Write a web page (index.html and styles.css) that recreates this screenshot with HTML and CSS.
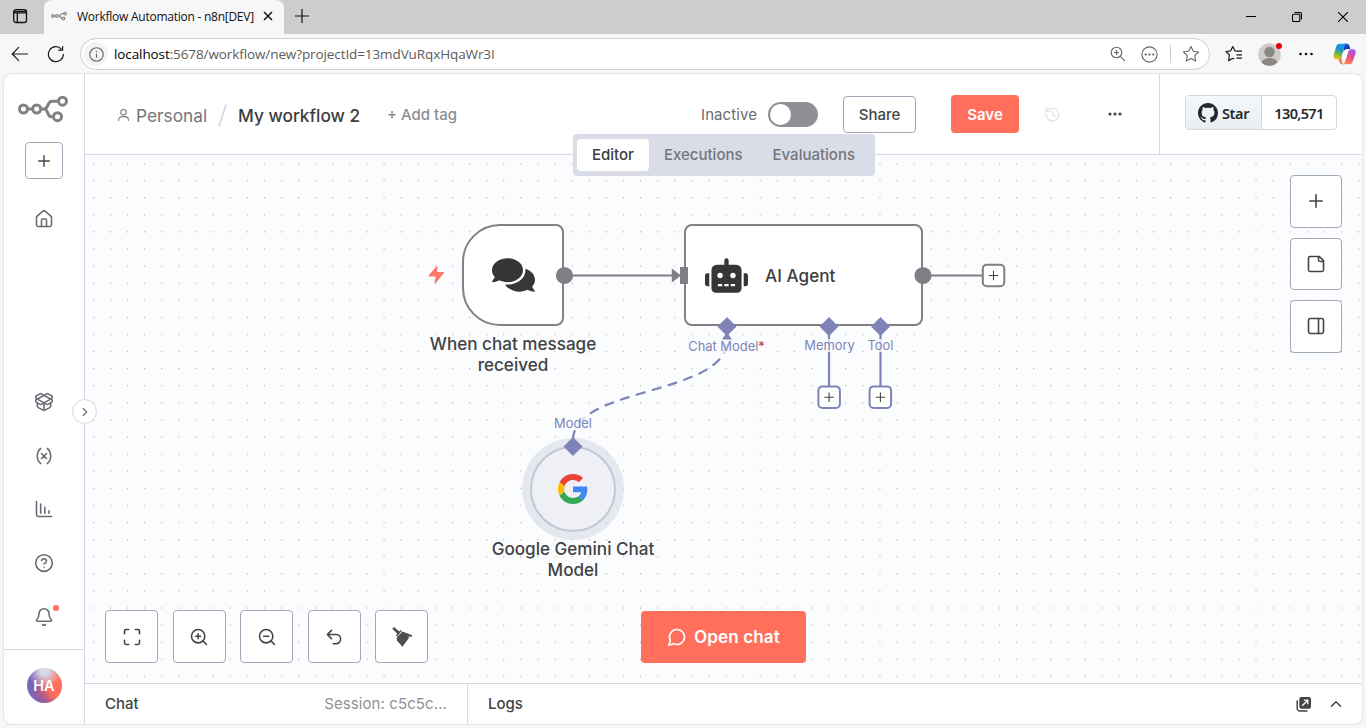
FILE: index.html
```html
<!DOCTYPE html>
<html lang="en">
<head>
<meta charset="utf-8">
<title>Workflow Automation - n8n[DEV]</title>
<link rel="stylesheet" href="styles.css">
</head>
<body>
<div class="browser">
  <div class="tabstrip">
    <div class="tab-actions">
      <svg width="16" height="16" viewBox="0 0 16 16" fill="none" stroke="#111" stroke-width="1.3"><rect x="1.7" y="1.7" width="12.8" height="12.8" rx="2.2"/><path d="M2 3.4h12.4M2 4.8h12.4M5.3 5v9.3" /></svg>
    </div>
    <div class="tab">
      <svg class="favicon" width="16" height="10" viewBox="0 0 50 28" fill="none" stroke="#8a8a8a" stroke-width="4"><circle cx="6" cy="14" r="4"/><circle cx="19" cy="14" r="4"/><circle cx="44" cy="6.500" r="4"/><circle cx="39" cy="21.500" r="4"/><path d="M10 14h5M23 14h3c5 0 3-7.500 8-7.500h6M26 14c5 0 3 7.500 8 7.500h1"/></svg>
      <span class="tab-title">Workflow Automation - n8n[DEV]</span>
      <svg width="10" height="10" viewBox="0 0 10 10" stroke="#111" stroke-width="1.500"><path d="M1 1l8 8M9 1l-8 8"/></svg>
    </div>
    <svg class="new-tab" width="14" height="14" viewBox="0 0 14 14" stroke="#111" stroke-width="1.200"><path d="M7 0v14M0 7h14"/></svg>
    <div class="window-buttons">
      <svg width="10" height="10" viewBox="0 0 10 10" stroke="#000" fill="none"><path d="M0 4.500h10"/></svg>
      <svg width="10" height="10" viewBox="0 0 10 10" stroke="#000" fill="none" stroke-width="1.100"><rect x=".5" y="2.200" width="7.300" height="7.300" rx="1.200"/><path d="M2.500.5h5a2 2 0 0 1 2 2v5"/></svg>
      <svg width="10" height="10" viewBox="0 0 10 10" stroke="#000" fill="none" stroke-width="1.100"><path d="M0 0l10 10M10 0L0 10"/></svg>
    </div>
  </div>
  <div class="toolbar">
    <svg class="nav-back" width="18" height="16" viewBox="0 0 18 16" fill="none" stroke="#1b1b1b" stroke-width="1.200"><path d="M17 8H1.500M8 1.200L1.200 8 8 14.800"/></svg>
    <svg class="nav-reload" width="18" height="18" viewBox="0 0 18 18" fill="none" stroke="#1b1b1b" stroke-width="1.200"><path d="M16.400 9A7.500 7.500 0 1 1 14.500 4.200M15.600 1v4.200h-4.400"/></svg>
    <div class="address">
      <span class="site-info"><svg width="15" height="15" viewBox="0 0 15 15" fill="none" stroke="#666" stroke-width="1.100"><circle cx="7.500" cy="7.500" r="6.700"/><path d="M7.500 6.700v4M7.500 4v1.300"/></svg></span>
      <span class="url"><b>localhost</b>:5678/workflow/new?projectId=13mdVuRqxHqaWr3I</span>
      <svg class="a-zoom" width="16" height="16" viewBox="0 0 16 16" fill="none" stroke="#666" stroke-width="1.100"><circle cx="6.500" cy="6.500" r="5.300"/><path d="M10.300 10.300l4.500 4.500M6.500 4v5M4 6.500h5"/></svg>
      <svg class="a-more" width="17" height="17" viewBox="0 0 17 17" fill="none" stroke="#666" stroke-width="1.100"><circle cx="8.500" cy="8.500" r="7.600"/><g fill="#555" stroke="none"><circle cx="4.700" cy="8.500" r="1.100"/><circle cx="8.500" cy="8.500" r="1.100"/><circle cx="12.300" cy="8.500" r="1.100"/></g></svg>
      <span class="a-sep"></span>
      <svg class="a-star" width="18" height="18" viewBox="0 0 18 18" fill="none" stroke="#666" stroke-width="1.100" stroke-linejoin="round"><path d="M9 1.400l2.300 4.900 5.300.7-3.900 3.700 1 5.300L9 13.400 4.300 16l1-5.300L1.400 7l5.300-.7z"/></svg>
    </div>
    <svg class="favs" width="18" height="18" viewBox="0 0 18 18" fill="none" stroke="#1b1b1b" stroke-width="1.200" stroke-linejoin="round"><path d="M12 6.100l-2-.2L7.800 1.500 5.700 5.800 1 6.500l3.400 3.300L3.600 15.600l4.200-2.300 1.400.8M11 6.200h6M11.500 9.800H17M11.500 13.200H17"/></svg>
    <div class="profile">
      <svg width="23" height="23" viewBox="0 0 23 23"><defs><clipPath id="pc"><circle cx="11.500" cy="11.500" r="11.300"/></clipPath></defs><g clip-path="url(#pc)"><path fill="#cfccc8" d="M0 0h23v23H0z"/><circle cx="11.500" cy="9" r="5.200" fill="#8b8783"/><ellipse cx="11.500" cy="20.500" rx="8" ry="5.500" fill="#8b8783"/></g></svg>
      <i class="profile-dot"></i>
    </div>
    <svg class="menu" width="14" height="4" viewBox="0 0 14 4" fill="#111"><circle cx="1.500" cy="2" r="1.300"/><circle cx="7" cy="2" r="1.300"/><circle cx="12.500" cy="2" r="1.300"/></svg>
    <svg class="copilot" width="23" height="22" viewBox="0 0 23 22">
      <defs>
        <linearGradient id="ca" x1=".5" y1="0" x2=".3" y2="1"><stop offset="0" stop-color="#159ef0"/><stop offset=".35" stop-color="#1c8fce"/><stop offset=".65" stop-color="#62b948"/><stop offset="1" stop-color="#fbc30b"/></linearGradient>
        <linearGradient id="cb" x1=".7" y1="0" x2=".3" y2="1"><stop offset="0" stop-color="#a056ee"/><stop offset=".5" stop-color="#e84f90"/><stop offset="1" stop-color="#ff8a4a"/></linearGradient>
      </defs>
      <path fill="#1746b8" d="M11 .8h2.700c1.800 0 2.300 1 2.900 2.800l.9 2.700h-3.300c-2 0-3.200 1-3.800 3z"/>
      <path fill="url(#ca)" d="M6.700.8h7.200c-1.500.4-2.100 1.500-2.700 3.500L9 12.500c-.7 2.400-1.600 3.700-3.800 3.700H3.100C.6 16.200 0 14.200.8 11.500L3 4.300C3.700 1.900 4.700.8 6.700.8z"/>
      <path fill="#f2683c" d="M5.300 16.200c2 0 3-1.200 3.700-3.600l-.4 4.600c0 2 .8 3.700 2.300 4H9.500c-1.800 0-2.400-1-3-2.700-.4-1.200-.5-1.900-1.200-2.300z"/>
      <path fill="url(#cb)" d="M16.400 21.200H9.700c1.500-.4 2.100-1.500 2.700-3.500L14.700 10c.7-2.400 1.600-3.700 3.800-3.700h1.600c2.500 0 3.100 2 2.300 4.700L20 17.700c-.7 2.400-1.600 3.500-3.600 3.500z"/>
      <path fill="#fff" d="M11.300 9.300c.5-1.900 1.500-3 3.300-3h3.300c-1.700.3-2.600 1.600-3.200 3.700l-1.500 4.800c-.5 1.500-1.500 2.200-3 2.200H8.700c-.1-1.500 0-3 .5-4.600z"/>
    </svg>
  </div>

  <div class="app">
    <aside class="sidebar">
      <svg class="logo" width="50" height="28" viewBox="0 0 50 28" fill="none" stroke="#828282" stroke-width="3"><circle cx="5.500" cy="14" r="4"/><circle cx="18.700" cy="14" r="4"/><circle cx="44.500" cy="6.200" r="4"/><circle cx="39.500" cy="21.700" r="4"/><path d="M9.500 14h5M22.700 14h3.500c4.500 0 2.500-7.800 8-7.800h6.300M26.200 14c4.500 0 2.300 7.700 7 7.700h2.300"/></svg>
      <button class="side-add"><svg class="ic" width="18" height="18" viewBox="0 0 24 24"><path d="M5 12h14M12 5v14"/></svg></button>
      <svg class="ic home" width="20" height="20" viewBox="0 0 24 24"><path d="M15 21v-8a1 1 0 0 0-1-1h-4a1 1 0 0 0-1 1v8"/><path d="M3 10a2 2 0 0 1 .709-1.528l7-6a2 2 0 0 1 2.582 0l7 6A2 2 0 0 1 21 10v9a2 2 0 0 1-2 2H5a2 2 0 0 1-2-2z"/></svg>
      <nav class="side-bottom">
        <svg class="ic" viewBox="0 0 24 24"><path d="M12 22v-9"/><path d="M15.170 2.210a1.670 1.670 0 0 1 1.630 0L21 4.570a1.930 1.930 0 0 1 0 3.360L8.820 14.790a1.655 1.655 0 0 1-1.640 0L3 12.430a1.930 1.930 0 0 1 0-3.360z"/><path d="M20 13v3.870a2.060 2.060 0 0 1-1.110 1.830l-6 3.080a1.930 1.930 0 0 1-1.780 0l-6-3.080A2.060 2.060 0 0 1 4 16.870V13"/><path d="M21 12.430a1.930 1.930 0 0 0 0-3.360L8.830 2.200a1.640 1.640 0 0 0-1.630 0L3 4.570a1.930 1.930 0 0 0 0 3.360l12.180 6.860a1.636 1.636 0 0 0 1.630 0z"/></svg>
        <svg class="ic" viewBox="0 0 24 24"><path d="M8 21s-4-3-4-9 4-9 4-9M16 3s4 3 4 9-4 9-4 9M15 9l-6 6M9 9l6 6"/></svg>
        <svg class="ic" viewBox="0 0 24 24"><path d="M3 3v16a2 2 0 0 0 2 2h16M8 17V6M13 17V10M18 17v-3"/></svg>
        <svg class="ic" viewBox="0 0 24 24"><circle cx="12" cy="12" r="10"/><path d="M9.090 9a3 3 0 0 1 5.830 1c0 2-3 3-3 3M12 17h.01"/></svg>
        <div class="bell"><svg class="ic" viewBox="0 0 24 24"><path d="M10.268 21a2 2 0 0 0 3.464 0"/><path d="M3.262 15.326A1 1 0 0 0 4 17h16a1 1 0 0 0 .740-1.673C19.410 13.956 18 12.499 18 8A6 6 0 0 0 6 8c0 4.499-1.411 5.956-2.738 7.326"/></svg><i></i></div>
      </nav>
      <div class="side-user"><span class="avatar">HA</span></div>
      <span class="expander"><svg class="ic" width="14" height="14" viewBox="0 0 24 24"><path d="M9 18l6-6-6-6"/></svg></span>
    </aside>

    <main class="main">
      <header class="header">
        <div class="crumbs">
          <svg class="ic person" width="13" height="14" viewBox="0 0 24 24"><circle cx="12" cy="7" r="5"/><path d="M3 22v-1a6 6 0 0 1 6-6h6a6 6 0 0 1 6 6v1"/></svg>
          <span class="personal">Personal</span>
          <svg class="slash" width="9" height="23" viewBox="0 0 9 23" stroke="#d9dce8" stroke-width="2"><path d="M8 0.500L1 22.500"/></svg>
          <span class="wf-name">My workflow 2</span>
          <span class="add-tag">+ Add tag</span>
        </div>
        <div class="actions">
          <span class="inactive">Inactive</span>
          <span class="switch"></span>
          <button class="share">Share</button>
          <button class="save">Save</button>
          <svg class="ic history" width="17" height="17" viewBox="0 0 24 24"><path d="M3 12a9 9 0 1 0 9-9 9.750 9.750 0 0 0-6.740 2.740L3 8M3 3v5h5M12 7v5l4 2"/></svg>
          <svg class="dots" width="14" height="4" viewBox="0 0 14 4" fill="#444"><circle cx="2" cy="2" r="1.600"/><circle cx="7" cy="2" r="1.600"/><circle cx="12" cy="2" r="1.600"/></svg>
        </div>
        <div class="github">
          <div class="gh-button">
            <span class="gh-star"><svg width="20" height="20" viewBox="0 0 16 16" fill="#24292f"><path d="M8 0C3.580 0 0 3.580 0 8c0 3.540 2.290 6.530 5.470 7.590.4.070.55-.17.55-.38 0-.19-.01-.82-.01-1.490-2.010.37-2.530-.49-2.690-.94-.09-.23-.48-.94-.82-1.130-.28-.15-.68-.52-.01-.53.63-.01 1.080.58 1.230.82.72 1.210 1.870.87 2.330.66.07-.52.28-.87.51-1.070-1.780-.2-3.640-.89-3.640-3.950 0-.87.31-1.590.82-2.150-.08-.2-.36-1.020.08-2.120 0 0 .67-.21 2.200.82.64-.18 1.320-.27 2-.27s1.360.09 2 .27c1.530-1.040 2.200-.82 2.200-.82.44 1.100.16 1.920.08 2.120.51.56.82 1.270.82 2.150 0 3.070-1.870 3.750-3.650 3.950.29.25.54.73.54 1.480 0 1.070-.01 1.930-.01 2.200 0 .21.15.46.55.38A8.010 8.010 0 0 0 16 8c0-4.420-3.580-8-8-8z"/></svg>Star</span>
            <span class="gh-count">130,571</span>
          </div>
        </div>
      </header>

      <section class="canvas">
        <svg class="layer" viewBox="85 155 1277 528" fill="none">
          <defs><pattern id="dots" x="92.900" y="162.900" width="17.097" height="17.097" patternUnits="userSpaceOnUse"><circle cx=".6" cy=".6" r=".6" fill="#9a9ea8"/></pattern></defs>
          <rect x="85" y="155" width="1277" height="528" fill="url(#dots)"/>
          <path d="M564 275.500H676M923 275.500H983" stroke="#7d7f84" stroke-width="2"/>
          <path d="M829 327V386M880.500 327V386" stroke="#7f83b8" stroke-width="2.200"/>
          <path d="M573 440C573 386 727 396 727 340" stroke="#7f83b8" stroke-width="2.200" stroke-dasharray="10 6.500"/>
        </svg>

        <div class="node trigger"><svg width="43" height="34" viewBox="0 32 576 448" fill="#363636"><path d="M416 192c0-88.400-93.100-160-208-160S0 103.600 0 192c0 34.300 14.100 65.900 38 92-13.400 30.200-35.500 54.200-35.800 54.500-2.200 2.300-2.800 5.700-1.500 8.700S4.800 352 8 352c36.600 0 66.900-12.300 88.700-25 32.200 15.700 70.300 25 111.300 25 114.900 0 208-71.600 208-160zm122 220c23.900-26 38-57.700 38-92 0-66.900-53.500-124.200-129.300-148.100.9 6.600 1.300 13.300 1.300 20.100 0 105.900-107.700 192-240 192-10.800 0-21.300-.8-31.700-1.900C207.800 439.600 281.800 480 368 480c41 0 79.100-9.200 111.300-25 21.800 12.700 52.100 25 88.700 25 3.200 0 6.100-1.900 7.300-4.800 1.300-2.900.7-6.300-1.500-8.700-.3-.3-22.400-24.200-35.800-54.500z"/></svg></div>
        <div class="node agent"><svg width="43" height="35" viewBox="0 0 640 512" fill="#363636"><path d="M32,224H64V416H32A31.960,31.960,0,0,1,0,384V256A31.960,31.960,0,0,1,32,224Zm512-48V448a64.060,64.060,0,0,1-64,64H160a64.060,64.060,0,0,1-64-64V176a79.970,79.970,0,0,1,80-80H288V32a32,32,0,0,1,64,0V96H464A79.970,79.970,0,0,1,544,176ZM264,256a40,40,0,1,0-40,40A40,40,0,0,0,264,256Zm-8,128H192v32h64Zm96,0H288v32h64ZM456,256a40,40,0,1,0-40,40A40,40,0,0,0,456,256Zm-8,128H384v32h64ZM640,256V384a31.960,31.960,0,0,1-32,32H576V224h32A31.960,31.960,0,0,1,640,256Z"/></svg><span>AI Agent</span></div>
        <div class="node gemini"><svg width="30" height="30" viewBox="0 0 48 48"><path fill="#EA4335" d="M24 9.500c3.540 0 6.710 1.220 9.210 3.600l6.850-6.850C35.900 2.380 30.470 0 24 0 14.620 0 6.510 5.380 2.560 13.220l7.980 6.190C12.430 13.720 17.740 9.500 24 9.500z"/><path fill="#4285F4" d="M46.980 24.550c0-1.570-.15-3.090-.38-4.550H24v9.020h12.940c-.58 2.960-2.260 5.480-4.780 7.180l7.730 6c4.510-4.180 7.090-10.360 7.090-17.650z"/><path fill="#FBBC05" d="M10.530 28.590c-.48-1.450-.76-2.990-.76-4.590s.27-3.140.76-4.590l-7.980-6.190C.92 16.460 0 20.120 0 24c0 3.880.92 7.540 2.560 10.780l7.970-6.190z"/><path fill="#34A853" d="M24 48c6.480 0 11.930-2.130 15.890-5.810l-7.730-6c-2.150 1.450-4.920 2.300-8.160 2.300-6.260 0-11.570-4.220-13.470-9.910l-7.980 6.190C6.510 42.620 14.620 48 24 48z"/></svg></div>

        <svg class="layer" viewBox="85 155 1277 528" fill="none">
          <path d="M429.300 275.800L437 267 436 272.800H443.300L435.200 282.500 436.600 275.800z" fill="#ff7766" stroke="#ff7766" stroke-width="1.400" stroke-linejoin="round"/>
          <g fill="#7d7f84"><circle cx="564.500" cy="275.500" r="8.600"/><circle cx="923" cy="275.500" r="8.600"/><path d="M680 267h8v17h-8zM671.800 268.500L681 275.500 671.800 282.500z"/></g>
          <g fill="#7f83b8"><path d="M727 317l9.500 9.500-9.500 9.500-9.500-9.500zM829 317l9.500 9.500-9.500 9.500-9.500-9.500zM880.500 317l9.500 9.500-9.500 9.500-9.500-9.500zM573 437l9.500 9.500-9.500 9.500-9.500-9.500zM727 332l5 7.500h-10z"/></g>
          <g fill="#fff" stroke-width="2"><rect x="982.800" y="264.800" width="21.500" height="21.500" rx="4" stroke="#7d7f84"/><rect x="818.400" y="386.400" width="21.500" height="21.500" rx="4" stroke="#7f83b8"/><rect x="869.600" y="386.400" width="21.500" height="21.500" rx="4" stroke="#7f83b8"/></g>
          <path d="M988.800 275.500h9.400M993.500 270.800v9.400M824.400 397.200h9.400M829.100 392.500v9.400M875.700 397.200h9.400M880.400 392.500v9.400" stroke="#444" stroke-width="1.100"/>
        </svg>

        <span class="caption cap-trigger">When chat message<br>received</span>
        <span class="caption cap-gemini">Google Gemini Chat<br>Model</span>
        <span class="port p-chat">Chat Model<em>*</em></span>
        <span class="port p-memory">Memory</span>
        <span class="port p-tool">Tool</span>
        <span class="port p-model">Model</span>

        <div class="view-tabs"><span class="on">Editor</span><span>Executions</span><span>Evaluations</span></div>

        <div class="overlay">
          <div class="right-tools">
            <button class="sq"><svg class="ic" viewBox="0 0 24 24"><path d="M4.500 12h15M12 4.500v15"/></svg></button>
            <button class="sq"><svg class="ic" viewBox="0 0 24 24"><path d="M16 3H5a2 2 0 0 0-2 2v14a2 2 0 0 0 2 2h14a2 2 0 0 0 2-2V8zM15 3v4a2 2 0 0 0 2 2h4"/></svg></button>
            <button class="sq"><svg class="ic" viewBox="0 0 24 24"><rect x="3" y="3" width="18" height="18" rx="2"/><path d="M15 3v18"/></svg></button>
          </div>
          <div class="bottom-tools">
            <button class="sq"><svg class="ic" viewBox="0 0 24 24"><path d="M8 3H5a2 2 0 0 0-2 2v3M21 8V5a2 2 0 0 0-2-2h-3M3 16v3a2 2 0 0 0 2 2h3M16 21h3a2 2 0 0 0 2-2v-3"/></svg></button>
            <button class="sq"><svg class="ic" viewBox="0 0 24 24"><circle cx="11" cy="11" r="8"/><path d="M21 21l-4.350-4.350M11 8v6M8 11h6"/></svg></button>
            <button class="sq"><svg class="ic" viewBox="0 0 24 24"><circle cx="11" cy="11" r="8"/><path d="M21 21l-4.350-4.350M8 11h6"/></svg></button>
            <button class="sq"><svg class="ic" viewBox="0 0 24 24"><path d="M9 14L4 9l5-5M4 9h10.500a5.500 5.500 0 0 1 0 11H11"/></svg></button>
            <button class="sq"><svg class="broom" width="20" height="20" viewBox="0 0 20 20" fill="#4d4d4d"><path d="M.3 1.700L2 .1l5.300 4.300 1.500-1.500 1.100.9-5 5.700-1.100-.9 1.500-1.900zM10.500 4.600L20 8.300v1.500l-3.800-.4.800 1.600-6.700 8.800-2-2.600-3.300-3.500-.3-3.200z"/></svg></button>
          </div>
          <button class="open-chat"><svg class="ic" width="20" height="20" viewBox="0 0 24 24"><path d="M7.900 20A9 9 0 1 0 4 16.100L2 22z"/></svg><span>Open chat</span></button>
        </div>
      </section>

      <footer class="footer">
        <div class="chat-panel"><span>Chat</span><span class="session">Session: c5c5c...</span></div>
        <div class="logs-panel"><span>Logs</span>
          <div class="log-icons">
            <svg width="16" height="16" viewBox="0 0 16 16"><path d="M3.500 1h9.300A2.200 2.200 0 0 1 15 3.200v7.300a2.200 2.200 0 0 1-2.200 2.200H5.500a2.200 2.200 0 0 1-2.200-2.200V3.200A2.200 2.200 0 0 1 5.500 1z" fill="#444"/><path d="M1.200 5v7.300a2.700 2.700 0 0 0 2.700 2.700H11" fill="none" stroke="#444" stroke-width="1.500" stroke-linecap="round"/><path d="M6.200 9.800l5.300-5.300M7.800 4.200h4v4" fill="none" stroke="#fff" stroke-width="1.300"/></svg>
            <svg class="ic" width="18" height="18" viewBox="0 0 24 24"><path d="M18 15l-6-6-6 6"/></svg>
          </div>
        </div>
      </footer>
    </main>
  </div>
</div>
</body>
</html>
```
FILE: styles.css
```css
* { box-sizing: border-box; }
body { margin: 0; font-family: Inter, sans-serif; background: #f7f7f7; color: #414244; }
svg { display: block; flex: none; }
button { font: inherit; padding: 0; margin: 0; background: #fff; border: 1px solid #a3a8b9; border-radius: 4px; display: flex; align-items: center; justify-content: center; color: #444; }
.ic { fill: none; stroke: currentColor; stroke-width: 1.900; stroke-linecap: round; stroke-linejoin: round; }

.browser { width: 1366px; height: 728px; overflow: hidden; display: flex; flex-direction: column; }
.tabstrip { height: 34px; flex: none; background: #cdcdcd; display: flex; align-items: center; }
.tab-actions { width: 44px; height: 34px; padding: 8px 0 0 12px; }
.tab { width: 240px; height: 34px; background: #f7f7f7; border-radius: 8px 8px 0 0; display: flex; align-items: center; padding-left: 7px; padding-bottom: 2px; }
.tab-title { font: 12px "Open Sans", "Noto Sans", sans-serif; color: #111; width: 186px; margin-left: 10px; letter-spacing: -.25px; white-space: nowrap; }
.new-tab { margin: -3px 0 0 11px; }
.window-buttons { display: flex; gap: 36px; margin-left: auto; padding-right: 18px; }

.toolbar { height: 40px; flex: none; display: flex; align-items: center; padding-left: 11px; }
.nav-reload { margin: 0 15px 0 18px; }
.address { width: 1130px; height: 32px; background: #fff; border: 1px solid #cfcfcf; border-radius: 16px; display: flex; align-items: center; padding-left: 3px; }
.site-info { width: 24px; height: 24px; border-radius: 50%; background: #f3f3f3; display: flex; align-items: center; justify-content: center; }
.url { font: 13.500px "Open Sans", "Noto Sans", sans-serif; color: #5c5c5c; margin-left: 6px; width: 995px; white-space: nowrap; letter-spacing: -.1px; }
.url b { font-weight: 400; color: #000; }
.a-zoom { margin-left: 1px; }
.a-more { margin-left: 15px; }
.a-sep { width: 1px; height: 18px; background: #ccc; margin: 0 11px 0 12px; }
.favs { margin-left: 15px; }
.profile { position: relative; margin-left: 15px; }
.profile-dot { position: absolute; right: -1px; top: 0; width: 6px; height: 6px; border-radius: 50%; background: #e3000b; }
.menu { margin-left: 18px; }
.copilot { margin-left: 20px; }

.app { width: 1358px; height: 650px; flex: none; margin-left: 4px; background: #fff; border-radius: 8px; display: flex; box-shadow: 0 0 2px #bbb; }
.sidebar { position: relative; width: 81px; flex: none; border-right: 1px solid #d5d9e6; display: flex; flex-direction: column; align-items: center; color: #6a6c74; }
.logo { margin-top: 21px; margin-right: 3px; }
.side-add { width: 38px; height: 37px; margin-top: 19px; }
.home { margin-top: 30px; }
.side-bottom { margin-top: auto; display: flex; flex-direction: column; gap: 33.800px; }
.side-bottom .ic { width: 20px; height: 20px; }
.bell { position: relative; }
.bell i { position: absolute; left: 19px; top: -2px; width: 6px; height: 6px; border-radius: 50%; background: #ff6d5a; }
.side-user { margin-top: 22px; width: 80px; height: 75px; border-top: 1px solid #d5d9e6; display: flex; justify-content: center; padding-top: 18px; }
.avatar { width: 35px; height: 35px; border-radius: 50%; color: #fff; font-weight: 600; font-size: 14.500px; display: flex; align-items: center; justify-content: center; background: radial-gradient(circle at 50% 8%, #d8d8e8 0 12%, rgba(216,216,232,0) 48%), radial-gradient(circle at 95% 50%, #ff6d5a 0 32%, rgba(255,109,90,0) 80%), linear-gradient(75deg, #9277b3, #4c48c8 45%, #ad4f8b); }
.expander { position: absolute; right: -13px; top: 325px; width: 25px; height: 25px; border-radius: 50%; background: #fff; border: 1px solid #d5d9e6; display: flex; align-items: center; justify-content: center; z-index: 3; }

.main { flex: 1; display: flex; flex-direction: column; min-width: 0; }
.header { height: 81px; flex: none; border-bottom: 1px solid #d5d9e6; display: flex; align-items: stretch; }
.crumbs, .actions { display: flex; align-items: center; }
.crumbs { padding-left: 32px; width: 616px; font-size: 17.300px; padding-top: 2px; }
.crumbs span { white-space: nowrap; }
.personal { color: #73757b; margin-left: 6px; width: 82px; }
.wf-name { margin-left: 11px; width: 149px; color: #3c3d40; font-weight: 450; }
.person { color: #73757b; }
.crumbs .add-tag { font-size: 15px; font-weight: 500; color: #8b8d93; padding-bottom: 1px; }
.actions { width: 458px; font-size: 15px; }
.inactive { width: 67px; color: #6b6d73; letter-spacing: .1px; }
.switch { width: 50px; height: 25px; border-radius: 13px; background: #8f9095; padding: 2px; }
.switch::before { content: ""; display: block; width: 21px; height: 21px; border-radius: 50%; background: #fff; }
.share { width: 73px; height: 37px; margin-left: 25px; font-weight: 500; }
.save { width: 68px; height: 38px; margin-left: 35px; background: #ff6f5c; border: 0; color: #fff; font-weight: 600; }
.history { color: #dfe2ea; margin-left: 25px; }
.dots { margin-left: 47px; }
.github { flex: 1; border-left: 1px solid #d5d9e6; padding: 21px 0 0 25px; }
.gh-button { width: 152px; height: 35px; display: flex; border: 1px solid #cfd8e0; border-radius: 4px; font: 600 14.500px "Noto Sans", sans-serif; color: #24292f; overflow: hidden; }
.gh-star { width: 76px; border-right: 1px solid #cfd8e0; background: linear-gradient(#f5f8fa, #e9eef2); display: flex; align-items: center; gap: 4px; padding-left: 12px; letter-spacing: -.4px; }
.gh-count { flex: 1; display: flex; align-items: center; justify-content: center; letter-spacing: -.65px; }

.canvas { position: relative; height: 528px; flex: none; background: #fbfcfe; }
.layer { position: absolute; left: 0; top: 0; width: 1277px; height: 528px; }
.node { position: absolute; background: #fff; border: 2px solid #808287; display: flex; align-items: center; }
.trigger { left: 377px; top: 69px; width: 102px; height: 102px; border-radius: 38px 8px 8px 38px; justify-content: center; }
.agent { left: 599px; top: 69px; width: 239px; height: 102px; border-radius: 8px; padding-left: 19px; font-size: 17.100px; color: #3c3d40; }
.agent span { margin-left: 17px; font-weight: 450; letter-spacing: .05px; }
.gemini { left: 445px; top: 291px; width: 86px; height: 86px; border-radius: 50%; background: #eff0f6; border-color: #c3c7d5; justify-content: center; box-shadow: 0 0 0 8px rgba(212,215,226,.55); }
.caption { position: absolute; width: 200px; text-align: center; font-size: 17.100px; line-height: 21.300px; color: #414244; font-weight: 450; }
.cap-trigger { left: 328px; top: 178px; }
.cap-gemini { left: 388px; top: 383px; }
.port { position: absolute; font-size: 12.900px; line-height: 13px; color: #7f83b8; background: rgba(251,252,254,.75); white-space: nowrap; transform: translateX(-50%); }
.port em { color: #e0203a; font-style: normal; }
.p-chat { left: 641.500px; top: 185px; }
.p-memory { left: 744.500px; top: 184px; }
.p-tool { left: 795.500px; top: 184px; }
.p-model { left: 488px; top: 262px; }
.view-tabs { position: absolute; left: 488px; top: -21px; width: 302px; height: 42px; background: #dadde8; border-radius: 4px; padding: 5px 4px; display: flex; font-size: 15px; font-weight: 500; color: #73757b; }
.view-tabs span { height: 32px; padding: 0 15px 2px; display: flex; align-items: center; border-radius: 4px; }
.view-tabs .on { background: #fff; color: #3c3d40; }
.overlay { position: absolute; inset: 0; }
.sq { width: 53px; height: 53px; }
.sq .ic { width: 20px; height: 20px; }
.right-tools { position: absolute; right: 20px; top: 20px; display: flex; flex-direction: column; gap: 10px; }
.right-tools .sq { width: 52px; height: 52.500px; }
.bottom-tools { position: absolute; left: 20px; bottom: 20px; display: flex; gap: 14.500px; }
.open-chat { position: absolute; left: 556px; bottom: 20px; width: 165px; height: 52px; background: #ff6f5c; border: 0; color: #fff; font-size: 17.100px; font-weight: 600; gap: 7px; }
.open-chat span { padding-bottom: 1px; letter-spacing: .1px; }

.footer { height: 41px; flex: none; border-top: 1px solid #d5d9e6; display: flex; font-size: 15px; font-weight: 450; color: #414244; }
.chat-panel { width: 383px; border-right: 1px solid #d5d9e6; display: flex; align-items: center; justify-content: space-between; padding: 0 20px 1px; }
.session { font-weight: 400; color: #8f9197; letter-spacing: .1px; }
.logs-panel { flex: 1; display: flex; align-items: center; justify-content: space-between; padding: 0 17px 1px 20px; }
.log-icons { display: flex; align-items: center; gap: 15px; }
```
